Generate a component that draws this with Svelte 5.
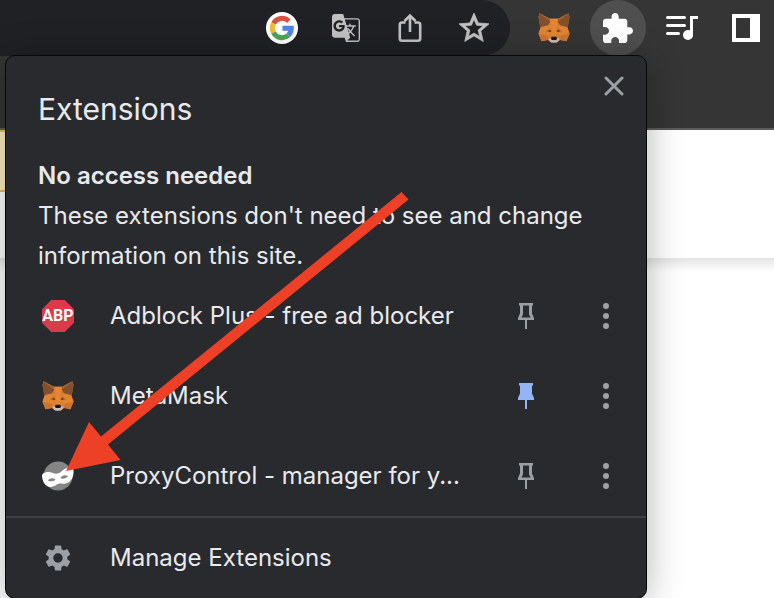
<script>
  const extensions = [
    { id: 'abp', name: 'Adblock Plus - free ad blocker', pinned: false },
    { id: 'fox', name: 'MetaMask', pinned: true },
    { id: 'mask', name: 'ProxyControl - manager for y...', pinned: false }
  ];
</script>

{#snippet fox()}
  <svg class="fox" viewBox="0 0 93 90" aria-hidden="true">
    <path fill="#dd7f30" d="M3 1 34 17H59L90 1 93 12 87 44 93 62 84 85 65 81 57 87H36L28 81 9 85 0 62 6 44 0 12Z" />
    <path fill="#83502f" d="M3 1 36 25 29 37 5 43 0 13ZM90 1 57 25 64 37 88 43 93 13Z" />
    <path fill="#a8612f" d="M3 1 34 17 38 27ZM90 1 59 17 55 27Z" />
    <path fill="#e48634" d="M34 17H59L53 38 55 70H38L40 38Z" />
    <path fill="#cf742e" d="M0 62 26 59 28 81 9 85ZM93 62 67 59 65 81 84 85Z" />
    <path fill="#e18434" d="M6 44 28 38 36 70 0 62ZM87 44 65 38 57 70 93 62Z" />
    <path fill="#b3612d" d="M22 56 34 47 40 57ZM71 56 59 47 53 57Z" />
    <path fill="#40373a" d="M28 54 35 51 37 57ZM65 54 58 51 56 57Z" />
    <path fill="#cdbbae" d="M30 77 39 74H54L63 77 60 84 54 89H39L33 84Z" />
    <path fill="#16181c" d="M40 71H53L56 76 53 81H40L37 76Z" />
  </svg>
{/snippet}

<div class="page">
  <header class="toolbar">
    <div class="omnibox">
      <button class="tool" aria-label="Search with Google">
        <svg width="32" height="32" viewBox="0 0 32 32">
          <circle cx="16" cy="16" r="16" fill="#fff" />
          <g fill="none" stroke-width="5">
            <path stroke="#d94f40" d="M7.500 11.400A9.600 9.600 0 0 1 22.800 9.200" />
            <path stroke="#f0bb35" d="M7.500 20.600A9.600 9.600 0 0 1 7.500 11.400" />
            <path stroke="#4ea353" d="M22.200 23.400A9.600 9.600 0 0 1 7.500 20.600" />
            <path stroke="#5383ec" d="M16.500 16.300H25.300A9.600 9.600 0 0 1 22.200 23.400" />
          </g>
        </svg>
      </button>
      <button class="tool" aria-label="Translate this page">
        <svg width="28" height="28" viewBox="2 2 20 20"><path fill="#c1c1c1" d="M20 5h-9.12L10 2H4c-1.1 0-2 .9-2 2v13c0 1.1.9 2 2 2h7l1 3h8c1.1 0 2-.9 2-2V7c0-1.1-.9-2-2-2zM7.17 14.59c-2.25 0-4.09-1.83-4.09-4.09s1.83-4.09 4.09-4.09c1.04 0 1.99.37 2.74 1.07l.07.06-1.23 1.18-.06-.05c-.29-.27-.78-.59-1.52-.59-1.31 0-2.38 1.09-2.38 2.42s1.07 2.42 2.38 2.42c1.37 0 1.96-.87 2.12-1.46H7.08V9.91h3.95l.01.07c.04.21.05.4.05.61 0 2.35-1.61 4-3.92 4zm6.03-1.71c.33.6.74 1.18 1.19 1.7l-.54.53-.65-2.23zm.77-.76h-.99l-.31-1.04h3.99s-.34 1.31-1.56 2.74c-.52-.62-.89-1.23-1.13-1.7zM21 20c0 .55-.45 1-1 1h-7l2-2-.81-2.77.92-.92L17.79 18l.73-.73-2.71-2.68c.9-1.03 1.6-2.25 1.92-3.51H19v-1.04h-3.64V9h-1.04v1.04h-1.96L11.18 6H20c.55 0 1 .45 1 1v13z" /></svg>
      </button>
      <button class="tool" aria-label="Share">
        <svg width="24" height="30" viewBox="0 0 24 30" fill="none" stroke="#c1c1c1" stroke-width="2.6">
          <path d="M7.500 9.500H4A2.200 2.200 0 0 0 1.800 11.700V25.600A2.200 2.200 0 0 0 4 27.800H20A2.200 2.200 0 0 0 22.200 25.600V11.700A2.200 2.200 0 0 0 20 9.500H16.500M12 19V3M6.500 8 12 2.500 17.500 8" />
        </svg>
      </button>
      <button class="tool" aria-label="Bookmark this tab">
        <svg width="30" height="30" viewBox="2 2 20 20"><path fill="#c1c1c1" stroke="#c1c1c1" stroke-width=".5" d="M22 9.240l-7.190-.620L12 2 9.190 8.630 2 9.240l5.460 4.730L5.820 21 12 17.270 18.180 21l-1.630-7.030L22 9.240zM12 15.400l-3.760 2.270 1-4.280-3.320-2.880 4.380-.380L12 6.100l1.710 4.040 4.380.380-3.320 2.880 1 4.280L12 15.400z" /></svg>
      </button>
    </div>
    <div class="tools">
      <button class="tool" aria-label="MetaMask">{@render fox()}</button>
      <button class="tool active" aria-label="Extensions">
        <svg width="30" height="30" viewBox="2 1 21 21"><path fill="#fff" d="M20.500 11H19V7c0-1.100-.9-2-2-2h-4V3.500C13 2.120 11.880 1 10.500 1S8 2.120 8 3.500V5H4c-1.100 0-1.990.9-1.990 2v3.800H3.500c1.490 0 2.700 1.210 2.700 2.700s-1.210 2.700-2.700 2.700H2V20c0 1.100.9 2 2 2h3.800v-1.500c0-1.490 1.210-2.700 2.700-2.700 1.490 0 2.700 1.210 2.700 2.700V22H17c1.100 0 2-.9 2-2v-4h1.500c1.380 0 2.500-1.120 2.500-2.500S21.880 11 20.500 11z" /></svg>
      </button>
      <button class="tool" aria-label="Media controls">
        <svg width="32" height="26" viewBox="0 0 32 26" fill="none" stroke="#fff" stroke-width="3" stroke-linecap="round">
          <path d="M1.500 2.500H18.500M1.500 10.500H18.500M1.500 18.500H12.500" />
          <path d="M25.500 20V2.500H30.500" stroke-linecap="square" />
          <circle cx="22" cy="20" r="5" fill="#fff" stroke="none" />
        </svg>
      </button>
      <button class="tool" aria-label="Side panel">
        <svg width="28" height="28" viewBox="0 0 28 28"><path fill="#fff" fill-rule="evenodd" d="M0 0H28V28H0ZM4 4V24H18V4Z" /></svg>
      </button>
    </div>
  </header>

  <main>
    <div class="banner"><div class="notice"></div></div>
    <div class="content"></div>
  </main>

  <section class="popup" aria-labelledby="popup-title">
    <div class="head">
      <h1 id="popup-title">Extensions</h1>
      <button class="close" aria-label="Close">
        <svg width="20" height="20" viewBox="0 0 20 20"><path d="M2 2 18 18M18 2 2 18" stroke="#9aa0a6" stroke-width="3" stroke-linecap="round" /></svg>
      </button>
    </div>
    <div class="about">
      <h2>No access needed</h2>
      <p>These extensions don't need to see and change information on this site.</p>
    </div>
    <ul>
      {#each extensions as ext (ext.id)}
        <li class="row">
          <button class="item">
            <span class="icon">
              {#if ext.id === 'abp'}
                <span class="abp">ABP</span>
              {:else if ext.id === 'fox'}
                {@render fox()}
              {:else}
                <svg width="32" height="30" viewBox="0 0 32 30" aria-hidden="true">
                  <circle cx="16" cy="15" r="14.500" fill="#858585" />
                  <path fill="#fff" fill-rule="evenodd" d="M0 14C2 10.500 7 10.500 11 12 14.500 13.500 17 12.500 20 10 24 6.500 28.500 5.500 31 7 32.500 12 31 18 27 21 23.500 23.500 20 22.500 17 22.500 14 23.500 12 26 8.500 26 3.500 26 0 20.500 0 14ZM6 19.500C8 21 12 20.500 13.500 18.500 11 16.500 7.500 17 6 19.500ZM18.500 17C20.500 18.500 24.500 17.500 26 15 23 13.500 20 14.500 18.500 17Z" />
                </svg>
              {/if}
            </span>
            <span class="name">{ext.name}</span>
          </button>
          <button class="act" aria-label={ext.pinned ? `Unpin ${ext.name}` : `Pin ${ext.name}`}>
            <svg width="16" height="26" viewBox="0 0 16 26">
              {#if ext.pinned}
                <path fill="#94b5f5" d="M1 0H15V2.500H14V10.500L16 15V17H9V26H7V17H0V15L2 10.500V2.500H1Z" />
              {:else}
                <path fill="#9aa0a6" fill-rule="evenodd" d="M1 0H15V2.500H14V10.500L16 15V17H9V26H7V17H0V15L2 10.500V2.500H1ZM5 2.500V11.500L3.300 14.500H12.700L11 11.500V2.500Z" />
              {/if}
            </svg>
          </button>
          <button class="act" aria-label={`More actions for ${ext.name}`}>
            <svg width="6" height="26" viewBox="0 0 6 26" fill="#a0a1a3"><circle cx="3" cy="3" r="3" /><circle cx="3" cy="13" r="3" /><circle cx="3" cy="23" r="3" /></svg>
          </button>
        </li>
      {/each}
    </ul>
    <div class="row manage">
      <button class="item">
        <span class="icon">
          <svg width="26" height="26" viewBox="2 2 20 20" aria-hidden="true"><path fill="#9aa0a6" d="M19.140 12.940c.04-.3.06-.61.06-.94 0-.32-.02-.64-.07-.94l2.030-1.580c.18-.14.23-.41.12-.61l-1.920-3.320c-.12-.22-.37-.29-.59-.22l-2.390.96c-.5-.38-1.030-.7-1.620-.94l-.36-2.540c-.04-.24-.24-.41-.48-.41h-3.840c-.24 0-.43.17-.47.41l-.36 2.540c-.59.24-1.130.57-1.620.94l-2.390-.96c-.22-.08-.47 0-.59.22L2.740 8.870c-.12.21-.08.47.12.61l2.030 1.580c-.05.3-.09.63-.09.94s.02.64.07.94l-2.030 1.580c-.18.14-.23.41-.12.61l1.920 3.320c.12.22.37.29.59.22l2.390-.96c.5.38 1.030.7 1.620.94l.36 2.540c.05.24.24.41.48.41h3.840c.24 0 .44-.17.47-.41l.36-2.540c.59-.24 1.130-.56 1.620-.94l2.390.96c.22.08.47 0 .59-.22l1.920-3.320c.12-.22.07-.47-.12-.61l-2.010-1.580zM12 15.600c-1.980 0-3.600-1.620-3.600-3.600s1.620-3.600 3.600-3.600 3.600 1.620 3.600 3.600-1.620 3.600-3.600 3.600z" /></svg>
        </span>
        <span class="name">Manage Extensions</span>
      </button>
    </div>
  </section>

  <svg class="arrow" width="343" height="280" viewBox="66 192 343 280" aria-hidden="true">
    <path fill="#ee4026" d="M66 471 89 422 101 436.500 401.500 192 408.500 199.500 108 444.500 120.500 460Z" />
  </svg>
</div>

<style>
  :global(body) {
    margin: 0;
    background: #fff;
  }
  .page {
    position: relative;
    min-height: 100vh;
    overflow: hidden;
    display: flex;
    flex-direction: column;
    font-family: Inter, "Liberation Sans", sans-serif;
    font-size: 24px;
    color: #e8eaed;
  }
  button {
    border: 0;
    padding: 0;
    background: none;
    font: inherit;
    color: inherit;
    text-align: left;
  }
  svg {
    display: block;
    flex: none;
  }
  .toolbar {
    display: flex;
    align-items: flex-start;
    gap: 16px;
    height: 128px;
    background: #353535;
    border-bottom: 2px solid #5c5c5c;
    box-sizing: border-box;
    height: 130px;
  }
  .omnibox {
    flex: 1;
    display: flex;
    justify-content: flex-end;
    gap: 8px;
    padding-right: 8px;
    background: #202124;
    border-radius: 0 28px 28px 0;
  }
  .tools {
    display: flex;
    gap: 8px;
  }
  .tool {
    display: flex;
    align-items: center;
    justify-content: center;
    width: 56px;
    height: 56px;
    border-radius: 50%;
  }
  .active {
    background: #4f4f4f;
  }
  .fox {
    width: 32px;
    height: 30px;
  }
  main {
    flex: 1;
    display: flex;
    flex-direction: column;
  }
  .banner {
    height: 128px;
    background: #fff;
  }
  .notice {
    width: 50%;
    height: 58px;
    background: #fdf0c2;
    border: solid #e8bd5c;
    border-width: 2px 0;
  }
  .content {
    flex: 1;
    background: linear-gradient(#e4e4e4, #fff 14px);
  }
  .popup {
    position: absolute;
    top: 55px;
    left: 5px;
    right: 127px;
    border: 1px solid #08080a;
    border-radius: 10px;
    background: #292a2d;
    box-shadow: 0 4px 36px rgba(0, 0, 0, 0.3);
    overflow: hidden;
  }
  .head {
    display: flex;
    justify-content: space-between;
    align-items: flex-start;
    height: 100px;
    padding: 0 20px 0 32px;
  }
  h1,
  h2,
  p,
  ul {
    margin: 0;
    padding: 0;
  }
  h1 {
    padding-top: 33px;
    font-size: 30px;
    line-height: 40px;
    font-weight: 400;
  }
  .close {
    display: flex;
    align-items: center;
    justify-content: center;
    width: 24px;
    height: 60px;
  }
  .about {
    padding: 0 32px;
    line-height: 40px;
  }
  h2 {
    font-size: 24px;
    font-weight: 600;
  }
  ul {
    list-style: none;
  }
  .row {
    display: flex;
    align-items: center;
    gap: 40px;
    height: 80px;
    padding: 0 20px 0 32px;
  }
  .item {
    flex: 1;
    min-width: 0;
    display: flex;
    align-items: center;
    gap: 32px;
    height: 100%;
  }
  .icon,
  .act {
    display: flex;
    align-items: center;
    justify-content: center;
    flex: none;
    width: 40px;
    height: 40px;
  }
  .name {
    line-height: 40px;
    white-space: nowrap;
  }
  .abp {
    width: 32px;
    height: 32px;
    background: #db3a4b;
    clip-path: polygon(29% 0, 71% 0, 100% 29%, 100% 71%, 71% 100%, 29% 100%, 0 71%, 0 29%);
    font: 700 16px/32px Roboto, sans-serif;
    text-align: center;
    color: #fff;
  }
  .manage {
    border-top: 2px solid #3f4043;
  }
  .arrow {
    position: absolute;
    left: 66px;
    top: 192px;
  }
</style>
